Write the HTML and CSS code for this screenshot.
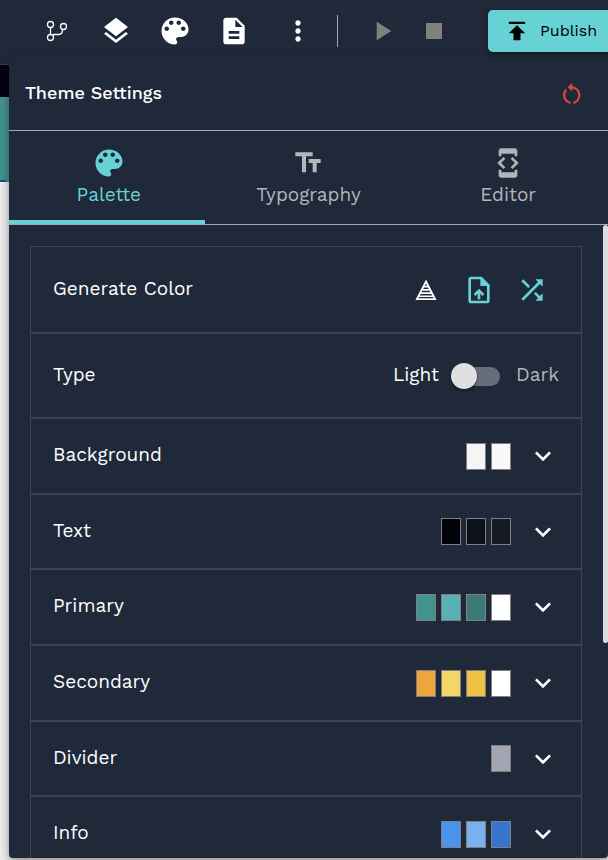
FILE: index.html
```html
<!DOCTYPE html>
<html lang="en">
<head>
<meta charset="utf-8">
<meta name="viewport" content="width=device-width, initial-scale=1">
<title>Theme Settings</title>
<link rel="stylesheet" href="styles.css">
</head>
<body>
<svg class="sprite" aria-hidden="true">
  <symbol id="palette" viewBox="0 0 24 24"><path d="M12 3c-4.97 0-9 4.03-9 9s4.03 9 9 9c.83 0 1.5-.67 1.5-1.5 0-.39-.15-.74-.39-1.01-.23-.26-.38-.61-.38-.99 0-.83.67-1.5 1.5-1.5H16c2.76 0 5-2.24 5-5 0-4.42-4.03-8-9-8zm-5.5 9c-.83 0-1.5-.67-1.5-1.5S5.67 9 6.500 9 8 9.670 8 10.500 7.330 12 6.500 12zm3-4C8.670 8 8 7.330 8 6.500S8.670 5 9.500 5s1.500.67 1.500 1.500S10.330 8 9.500 8zm5 0c-.83 0-1.500-.67-1.500-1.500S13.670 5 14.500 5s1.500.67 1.500 1.500S15.330 8 14.500 8zm3 4c-.83 0-1.500-.67-1.500-1.500S16.670 9 17.500 9s1.500.67 1.500 1.500-.67 1.500-1.500 1.500z"/></symbol>
  <symbol id="chevron" viewBox="0 0 24 24"><path d="M7.410 8.590 12 13.170l4.590-4.580L18 10l-6 6-6-6 1.410-1.410z"/></symbol>
</svg>

<header class="toolbar">
  <nav class="tools" aria-label="Project tools">
    <button class="icon-btn" aria-label="Branches"><svg class="icon" viewBox="0 0 32 32" fill="none" stroke="currentColor" stroke-width="1.3"><circle cx="9.500" cy="9.500" r="3"/><circle cx="9.500" cy="22.500" r="3"/><circle cx="22.500" cy="11.500" r="3"/><path d="M9.500 12.500v7M12 19.500h6c2.500 0 3.500-1.500 3.500-5"/></svg></button>
    <button class="icon-btn" aria-label="Layers"><svg class="icon" viewBox="0 0 24 24"><path d="m11.990 18.540-7.370-5.730L3 14.070l9 7 9-7-1.630-1.270-7.380 5.740zM12 16l7.360-5.730L21 9l-9-7-9 7 1.630 1.270L12 16z"/></svg></button>
    <button class="icon-btn" aria-label="Theme"><svg class="icon icon-lg"><use href="#palette"/></svg></button>
    <button class="icon-btn" aria-label="Pages"><svg class="icon" viewBox="0 0 24 24"><path d="M14 2H6c-1.100 0-1.990.9-1.990 2L4 20c0 1.100.89 2 1.990 2H18c1.100 0 2-.9 2-2V8l-6-6zm2 16H8v-2h8v2zm0-4H8v-2h8v2zm-3-5V3.500L18.500 9H13z"/></svg></button>
  </nav>
  <button class="icon-btn more" aria-label="More"><svg class="icon" viewBox="0 0 24 24"><path d="M12 8c1.100 0 2-.9 2-2s-.9-2-2-2-2 .9-2 2 .9 2 2 2zm0 2c-1.100 0-2 .9-2 2s.9 2 2 2 2-.9 2-2-.9-2-2-2zm0 6c-1.100 0-2 .9-2 2s.9 2 2 2 2-.9 2-2-.9-2-2-2z"/></svg></button>
  <span class="separator"></span>
  <div class="player">
    <button class="icon-btn" aria-label="Run" disabled><svg class="icon" viewBox="0 0 24 24"><path d="M8 5v14l11-7z"/></svg></button>
    <button class="icon-btn" aria-label="Stop" disabled><svg class="icon" viewBox="0 0 24 24"><path d="M6 6h12v12H6z"/></svg></button>
  </div>
  <button class="publish"><svg class="icon icon-sm" viewBox="0 0 24 24"><path d="M5 4v2h14V4H5zm0 10h4v6h6v-6h4l-7-7-7 7z"/></svg>Publish</button>
</header>

<main class="workspace">
  <div class="canvas-bar"></div>
  <div class="canvas-hero"></div>
</main>

<section class="panel" aria-labelledby="panel-title">
  <div class="panel-header">
    <h1 class="panel-title" id="panel-title">Theme Settings</h1>
    <button class="icon-btn reset" aria-label="Reset theme"><svg class="icon icon-xs" viewBox="0 0 24 24" fill="none" stroke="currentColor" stroke-width="2.300"><path d="M13.500 20.800A7.900 7.900 0 0 0 12 5.300M6.200 7.700A7.900 7.900 0 0 0 10.500 20.800"/><path d="M12.300 1v8.600L7.500 5.300z" fill="currentColor" stroke="none"/></svg></button>
  </div>
  <div class="tabs" role="tablist">
    <button class="tab" role="tab" aria-selected="true"><svg class="icon icon-lg"><use href="#palette"/></svg>Palette</button>
    <button class="tab" role="tab" aria-selected="false"><svg class="icon" viewBox="0 0 24 24"><path d="M2.500 4v3h5v12h3V7h5V4h-13zm19 5h-9v3h3v7h3v-7h3V9z"/></svg>Typography</button>
    <button class="tab" role="tab" aria-selected="false"><svg class="icon" viewBox="0 0 24 24"><path d="M7 5h10v2h2V3c0-1.100-.9-1.990-2-1.990L7 1c-1.100 0-2 .9-2 2v4h2V5zm8.410 11.590L20 12l-4.590-4.590L14 8.830 17.170 12 14 15.170l1.410 1.420zM10 15.170 6.830 12 10 8.830 8.590 7.410 4 12l4.590 4.590L10 15.170zM17 19H7v-2H5v4c0 1.100.9 2 2 2h10c1.100 0 2-.9 2-2v-4h-2v2z"/></svg>Editor</button>
  </div>
  <div class="panel-body">
    <div class="scroll">
      <ul class="settings">
        <li class="row row-generate">
          <span class="label">Generate Color</span>
          <span class="actions">
            <button class="icon-btn" aria-label="Contrast"><svg class="icon icon-xs" viewBox="0 0 24 24"><path fill-rule="evenodd" d="M12 1.500 22.600 22H1.400zM12 5.500l-1.100 2.200h2.200zM10 9.500l-.7 1.500h5.400L14 9.500zM8.300 12.800l-.8 1.500h9l-.8-1.500zM6.600 16l-.8 1.500h12.400l-.8-1.500zM5 19.100l-.6 1.200h15.200l-.6-1.200z"/></svg></button>
            <button class="icon-btn accent" aria-label="Upload"><svg class="icon" viewBox="0 0 24 24"><path d="M14 2H6c-1.100 0-1.990.9-1.990 2L4 20c0 1.100.89 2 1.990 2H18c1.100 0 2-.9 2-2V8l-6-6zm4 18H6V4h7v5h5v11zM8 15.010l1.410 1.410L11 14.840V19h2v-4.160l1.590 1.590L16 15.010 12.010 11 8 15.010z"/></svg></button>
            <button class="icon-btn accent" aria-label="Shuffle"><svg class="icon" viewBox="0 0 24 24"><path d="M10.590 9.170 5.410 4 4 5.410l5.170 5.170 1.420-1.410zM14.500 4l2.040 2.040L4 18.590 5.410 20 17.960 7.460 20 9.500V4h-5.500zm.33 9.410-1.410 1.410 3.130 3.130L14.500 20H20v-5.500l-2.040 2.040-3.130-3.130z"/></svg></button>
          </span>
        </li>
        <li class="row row-type">
          <span class="label">Type</span>
          <label class="mode"><span class="label">Light</span><input class="switch" type="checkbox" role="switch" aria-label="Dark mode"><span class="label muted">Dark</span></label>
        </li>
        <li><button class="row" aria-expanded="false"><span class="label">Background</span><span class="swatches"><i class="swatch bg-default"></i><i class="swatch bg-paper"></i></span><svg class="icon"><use href="#chevron"/></svg></button></li>
        <li><button class="row" aria-expanded="false"><span class="label">Text</span><span class="swatches"><i class="swatch text-primary"></i><i class="swatch text-secondary"></i><i class="swatch text-disabled"></i></span><svg class="icon"><use href="#chevron"/></svg></button></li>
        <li><button class="row" aria-expanded="false"><span class="label">Primary</span><span class="swatches"><i class="swatch primary-main"></i><i class="swatch primary-light"></i><i class="swatch primary-dark"></i><i class="swatch contrast"></i></span><svg class="icon"><use href="#chevron"/></svg></button></li>
        <li><button class="row" aria-expanded="false"><span class="label">Secondary</span><span class="swatches"><i class="swatch secondary-main"></i><i class="swatch secondary-light"></i><i class="swatch secondary-dark"></i><i class="swatch contrast"></i></span><svg class="icon"><use href="#chevron"/></svg></button></li>
        <li><button class="row" aria-expanded="false"><span class="label">Divider</span><span class="swatches"><i class="swatch divider"></i></span><svg class="icon"><use href="#chevron"/></svg></button></li>
        <li><button class="row" aria-expanded="false"><span class="label">Info</span><span class="swatches"><i class="swatch info-main"></i><i class="swatch info-light"></i><i class="swatch info-dark"></i></span><svg class="icon"><use href="#chevron"/></svg></button></li>
      </ul>
    </div>
    <div class="scrollbar"><div class="thumb"></div></div>
  </div>
</section>
</body>
</html>
```
FILE: styles.css
```css
:root {
  --surface: #202939;
  --accent: #67d2d5;
  --muted: #b3b5bb;
  --rule: #3b4454;
}

* { box-sizing: border-box; }

body {
  margin: 0;
  height: 100vh;
  display: flex;
  flex-direction: column;
  position: relative;
  overflow: hidden;
  background: #ececec;
  color: #fff;
  font: 400 19px/24px "Work Sans", Inter, "Liberation Sans", sans-serif;
}

button {
  margin: 0;
  padding: 0;
  border: 0;
  background: none;
  color: inherit;
  font: inherit;
  cursor: pointer;
}

.sprite { position: absolute; width: 0; height: 0; }

.icon {
  display: block;
  flex: none;
  width: 32px;
  height: 32px;
  fill: currentColor;
}
.icon[fill="none"] { fill: none; }
.icon-lg { width: 36px; height: 36px; }
.icon-sm { width: 28px; height: 28px; }
.icon-xs { width: 24px; height: 24px; }

.icon-btn { display: flex; align-items: center; justify-content: center; }
.icon-btn:disabled { color: #808080; cursor: default; }

.toolbar {
  flex: none;
  height: 65px;
  padding: 0 0 3px 41px;
  display: flex;
  align-items: center;
  background: var(--surface);
  border-bottom: 1px solid #443f3c;
}
.tools { display: flex; gap: 27px; align-items: center; }
.tools .icon-btn { width: 32px; }
.more { margin-left: 32px; }
.separator { flex: none; width: 1px; height: 32px; margin: 0 28px 0 23px; background: #a3a8b0; }
.player { display: flex; gap: 20px; }
.publish {
  flex: none;
  height: 42px;
  margin-left: 38px;
  padding: 0 15px;
  display: flex;
  align-items: center;
  gap: 9px;
  border-radius: 5px;
  background: var(--accent);
  color: #000;
  font-size: 16px;
  box-shadow: 0 2px 5px rgba(0, 0, 0, .4);
}

.workspace { flex: 1; }
.canvas-bar { height: 32px; background: #020414; }
.canvas-hero { height: 85px; background: #43918f; border-bottom: 2px dashed #234a92; }

.panel {
  position: absolute;
  inset: 57px 0 2px 9px;
  display: flex;
  flex-direction: column;
  overflow: hidden;
  background: var(--surface);
  border-radius: 4px;
  box-shadow: 0 3px 8px rgba(0, 0, 0, .4);
}
.panel-header {
  flex: none;
  height: 74px;
  padding: 0 24px 0 16px;
  display: flex;
  align-items: center;
  justify-content: space-between;
  border-bottom: 1px solid #a6a9b5;
}
.panel-title { margin: 0; padding-bottom: 2px; font-size: 18px; font-weight: 500; }
.reset { color: #d9483f; }

.tabs {
  flex: none;
  height: 94px;
  display: grid;
  grid-template-columns: repeat(3, 1fr);
  border-bottom: 1px solid #a6a9b5;
}
.tab {
  position: relative;
  display: flex;
  flex-direction: column;
  align-items: center;
  justify-content: flex-end;
  padding-bottom: 17px;
  color: var(--muted);
}
.tab .icon { margin-bottom: 4px; }
.tab .icon-lg { margin-bottom: 2px; }
.tab[aria-selected="true"] { color: var(--accent); }
.tab[aria-selected="true"]::after {
  content: "";
  position: absolute;
  inset: auto 4px 0 0;
  height: 4px;
  background: var(--accent);
}

.panel-body { flex: 1; min-height: 0; display: flex; }
.scroll {
  flex: 1;
  padding: 21px 21px 0;
  overflow-y: auto;
  scrollbar-width: none;
}
.scrollbar { width: 5px; }
.thumb { height: 66%; border-radius: 4px; background: #dcdcdc; }

.settings { margin: 0; padding: 0; list-style: none; border: 1px solid var(--rule); }
.row {
  width: 100%;
  height: 76px;
  padding: 0 22px;
  display: flex;
  align-items: center;
  justify-content: space-between;
  text-align: left;
  border-bottom: 2px solid var(--rule);
}
.settings > :nth-child(3n + 1) .row { height: 75px; }
.row-generate { height: 87px; }
.row-type { height: 85px; }
.row > .icon { margin-left: 16px; }
.label { padding-bottom: 2px; }
.actions { display: flex; gap: 21px; margin-right: 11px; }
.actions .icon-btn { width: 32px; height: 32px; }
.accent { color: var(--accent); }
.muted { color: var(--muted); }

.mode { display: flex; align-items: center; }
.switch {
  appearance: none;
  position: relative;
  width: 49px;
  height: 26px;
  margin: 0 16px 0 12px;
  cursor: pointer;
}
.switch::before {
  content: "";
  position: absolute;
  inset: 4px 0 3px 4px;
  border-radius: 10px;
  background: #676d79;
}
.switch::after {
  content: "";
  position: absolute;
  left: 0;
  top: 0;
  width: 26px;
  height: 26px;
  border-radius: 50%;
  background: #e0e0e0;
  box-shadow: 0 1px 3px rgba(0, 0, 0, .5);
}
.switch:checked::after { left: 23px; }

.swatches { display: flex; gap: 5px; margin-left: auto; }
.swatch { width: 20px; height: 27px; border: 1px solid #808080; }
.bg-default { background: #f5f5f5; }
.bg-paper { background: #f9f9f9; }
.text-primary { background: #020308; }
.text-secondary { background: #0d1119; }
.text-disabled { background: #151a24; }
.primary-main { background: #439191; }
.primary-light { background: #5ab1b5; }
.primary-dark { background: #3d7879; }
.contrast { background: #fff; }
.secondary-main { background: #eda63c; }
.secondary-light { background: #f3d568; }
.secondary-dark { background: #efc244; }
.divider { background: #a3a6b2; }
.info-main { background: #4994ed; }
.info-light { background: #79b1f0; }
.info-dark { background: #3874cd; }
```
